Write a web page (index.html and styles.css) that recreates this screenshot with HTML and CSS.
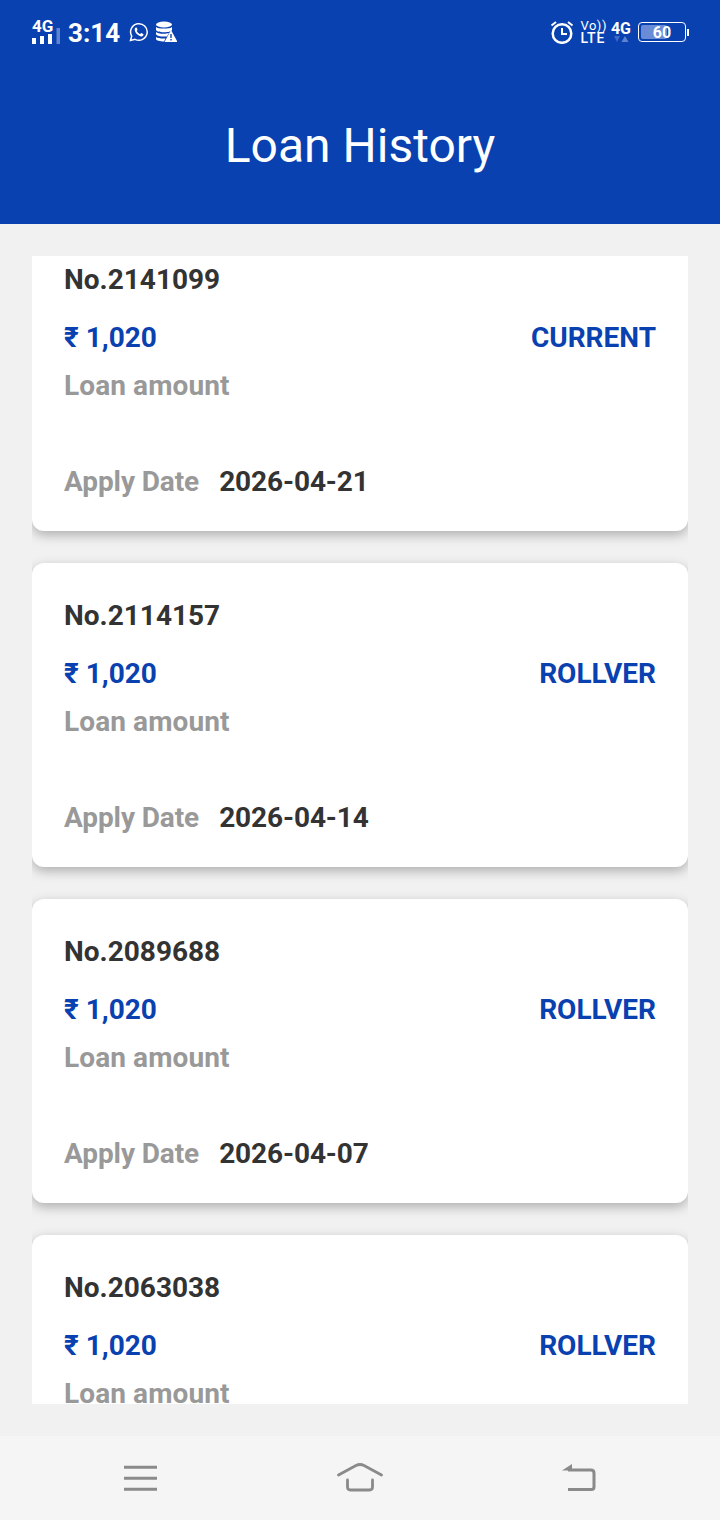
FILE: index.html

```html
<!DOCTYPE html>
<html lang="en">
<head>
  <meta charset="UTF-8">
  <title>Loan History</title>
  <link rel="stylesheet" href="styles.css">
</head>
<body>
  <header class="top">
    <div class="status">
      <div class="status-left">
        <div class="signal">
          <span class="signal-label">4G</span>
          <svg class="signal-bars" width="28" height="16" viewBox="0 0 28 16">
            <rect x="0" y="10" width="4" height="6" fill="#fff"/>
            <rect x="8" y="8" width="4" height="8" fill="#fff"/>
            <rect x="16" y="6" width="4" height="10" fill="#fff"/>
            <rect x="24.500" y="0" width="3.500" height="16" fill="#5f83d0"/>
          </svg>
        </div>
        <span class="clock">3:14</span>
        <svg class="whatsapp" width="20" height="20" viewBox="0 0 20 20" fill="none" stroke="#fff">
          <path stroke-width="1.5" d="M1.500 18.500l1.200-4.400A8.300 8.300 0 1 1 6 17.300z"/>
          <path fill="#fff" stroke="none" d="M7 5.500c-.5 0-1.300.7-1.300 2 0 3 3.300 6.600 6.800 6.900 1.200 0 2-.8 2-1.600 0-.6-.1-.7-.4-.9l-1.600-.8c-.4-.1-.6.1-1 .7-.2.200-.4.300-.8.100-1.300-.6-2.300-1.500-3-2.800-.1-.3.300-.6.700-1.200.1-.2 0-.4 0-.6l-.7-1.600c-.2-.3-.4-.2-.7-.2z"/>
        </svg>
        <svg class="storage" width="22" height="22" viewBox="0 0 22 22" fill="#fff">
          <ellipse cx="9" cy="3.500" rx="8" ry="3"/>
          <path d="M1 6c1.500 2 14.500 2 16 0v2.500c0 1.800-3.500 2.800-8 2.800s-8-1-8-2.800z"/>
          <path d="M1 11c1.500 2 10 2.300 13 1l-2 3.500c-5 .5-11-.6-11-2.500z"/>
          <path d="M1 16c1.500 1.200 6 1.700 9.500 1.400L9 20.500c-4 0-8-1-8-2.500z"/>
          <path d="M16 9l6.500 12H9.500z"/>
          <rect x="15.300" y="13" width="1.400" height="4" fill="#0a41b0"/>
          <rect x="15.300" y="18" width="1.400" height="1.500" fill="#0a41b0"/>
        </svg>
      </div>
      <div class="status-right">
        <svg class="alarm" width="24" height="24" viewBox="0 0 24 24" fill="none" stroke="#fff" stroke-width="2.500">
          <circle cx="12" cy="13.500" r="9.300"/>
          <path stroke-width="2" d="M12 8v6h5"/>
          <path stroke-width="2" d="M1.500 5.500L6 2M22.500 5.500L18 2"/>
        </svg>
        <div class="volte">
          <span class="volte-top">Vo))</span>
          <span class="volte-bottom">LTE</span>
        </div>
        <div class="net">
          <span class="net-label">4G</span>
          <svg width="16" height="7" viewBox="0 0 16 7">
            <path d="M1 0h6L4 6z" fill="#3f69c4"/>
            <path d="M12 0l3.500 6h-7z" fill="#5f83d0"/>
          </svg>
        </div>
        <div class="battery">
          <div class="battery-fill"></div>
          <span class="battery-num">60</span>
        </div>
        <div class="battery-tip"></div>
      </div>
    </div>
    <h1 class="title">Loan History</h1>
  </header>

  <main class="list">
    <div class="list-inner">
      <section class="card">
        <div class="card-no">No.2141099</div>
        <div class="card-row">
          <span class="amount">₹ 1,020</span>
          <span class="state">CURRENT</span>
        </div>
        <div class="muted amount-label">Loan amount</div>
        <div class="card-date"><span class="muted">Apply Date</span><span class="date">2026-04-21</span></div>
      </section>
      <section class="card">
        <div class="card-no">No.2114157</div>
        <div class="card-row">
          <span class="amount">₹ 1,020</span>
          <span class="state">ROLLVER</span>
        </div>
        <div class="muted amount-label">Loan amount</div>
        <div class="card-date"><span class="muted">Apply Date</span><span class="date">2026-04-14</span></div>
      </section>
      <section class="card">
        <div class="card-no">No.2089688</div>
        <div class="card-row">
          <span class="amount">₹ 1,020</span>
          <span class="state">ROLLVER</span>
        </div>
        <div class="muted amount-label">Loan amount</div>
        <div class="card-date"><span class="muted">Apply Date</span><span class="date">2026-04-07</span></div>
      </section>
      <section class="card">
        <div class="card-no">No.2063038</div>
        <div class="card-row">
          <span class="amount">₹ 1,020</span>
          <span class="state">ROLLVER</span>
        </div>
        <div class="muted amount-label">Loan amount</div>
      </section>
    </div>
  </main>

  <nav class="nav">
    <svg width="36" height="30" viewBox="0 0 36 30" fill="none" stroke="#8a8a8a" stroke-width="3">
      <path d="M2 4.300h33M2 15.300h33M2 26.300h33"/>
    </svg>
    <svg width="52" height="34" viewBox="0 0 52 34" fill="none" stroke="#8a8a8a" stroke-width="2.800" stroke-linecap="round" stroke-linejoin="round">
      <path d="M4.500 14L22 4.500q4-2 8 0L47.500 14"/>
      <path d="M13.500 19v7q0 3 3 3h19q3 0 3-3v-7"/>
    </svg>
    <svg width="40" height="32" viewBox="0 0 40 32" fill="none" stroke="#8a8a8a" stroke-width="3">
      <path d="M8 8h23q3 0 3 3v14q0 2.500-2.500 2.500H8"/>
      <path d="M2 8.500L12 2v6.500z" fill="#8a8a8a" stroke="none"/>
    </svg>
  </nav>
</body>
</html>
```

FILE: styles.css

```css
body {
  margin: 0;
  width: 720px;
  height: 1520px;
  overflow: hidden;
  background: #f1f1f1;
  font-family: Roboto, sans-serif;
  display: flex;
  flex-direction: column;
}

.top {
  height: 224px;
  background: #0a41b0;
  color: #fff;
}

.status {
  height: 64px;
  padding: 0 31px 0 32px;
  display: flex;
  justify-content: space-between;
  align-items: center;
}

.status-left, .status-right {
  display: flex;
  align-items: center;
}

.signal {
  width: 30px;
  display: flex;
  flex-direction: column;
  font-size: 17px;
  line-height: 13px;
  font-weight: 700;
}

.signal-bars {
  margin-top: -5px;
}

.clock {
  margin-left: 6px;
  padding-top: 2px;
  font-size: 26px;
  font-weight: 700;
}

.whatsapp {
  margin-left: 9px;
}

.storage {
  margin-left: 6px;
}

.volte {
  margin-left: 6px;
  display: flex;
  flex-direction: column;
  font-weight: 500;
}

.volte-top {
  font-size: 13px;
  line-height: 12px;
  font-weight: 400;
  letter-spacing: 0.5px;
}

.volte-bottom {
  font-size: 14px;
  line-height: 13px;
  letter-spacing: 0.8px;
}

.net {
  margin-left: 4px;
  display: flex;
  flex-direction: column;
  align-items: center;
}

.net-label {
  font-size: 16px;
  line-height: 15px;
  font-weight: 700;
}

.battery {
  position: relative;
  margin-left: 7px;
  width: 46px;
  height: 18px;
  border: 1px solid #fff;
  border-radius: 4px;
  display: flex;
  align-items: center;
  justify-content: center;
}

.battery-fill {
  position: absolute;
  left: 2px;
  top: 2px;
  bottom: 2px;
  width: 26px;
  border-radius: 2px;
  background: #6a8bd6;
}

.battery-num {
  position: relative;
  font-size: 16px;
  font-weight: 700;
}

.battery-tip {
  width: 2px;
  height: 7px;
  margin-left: 1px;
  background: #fff;
}

.title {
  margin: 54px 0 0;
  text-align: center;
  font-size: 48px;
  line-height: 56px;
  font-weight: 400;
}

.list {
  margin: 32px 32px 0;
  height: 1148px;
  overflow: hidden;
}

/* first card is scrolled up under the header */
.list-inner {
  margin-top: -29px;
  display: flex;
  flex-direction: column;
  gap: 32px;
}

.card {
  height: 304px;
  flex-shrink: 0;
  box-sizing: border-box;
  padding: 33px 32px 0;
  background: #fff;
  border-radius: 12px;
  box-shadow: 0 4px 12px rgba(0, 0, 0, 0.28);
  font-size: 28px;
  font-weight: 700;
}

.card-no {
  line-height: 40px;
  color: #333;
}

.card-row {
  margin-top: 18px;
  display: flex;
  justify-content: space-between;
  line-height: 40px;
  color: #0a41b0;
}

.amount-label {
  margin-top: 8px;
  line-height: 40px;
  letter-spacing: 0.1px;
}

.muted {
  color: #999;
}

.card-date {
  margin-top: 56px;
  line-height: 40px;
}

.card-date .muted {
  letter-spacing: -0.1px;
}

.date {
  margin-left: 20px;
  color: #333;
  letter-spacing: -0.1px;
}

.nav {
  margin-top: 32px;
  height: 84px;
  padding: 0 30px;
  background: #f5f5f5;
  display: grid;
  grid-template-columns: repeat(3, 1fr);
  justify-items: center;
  align-items: center;
}
```
